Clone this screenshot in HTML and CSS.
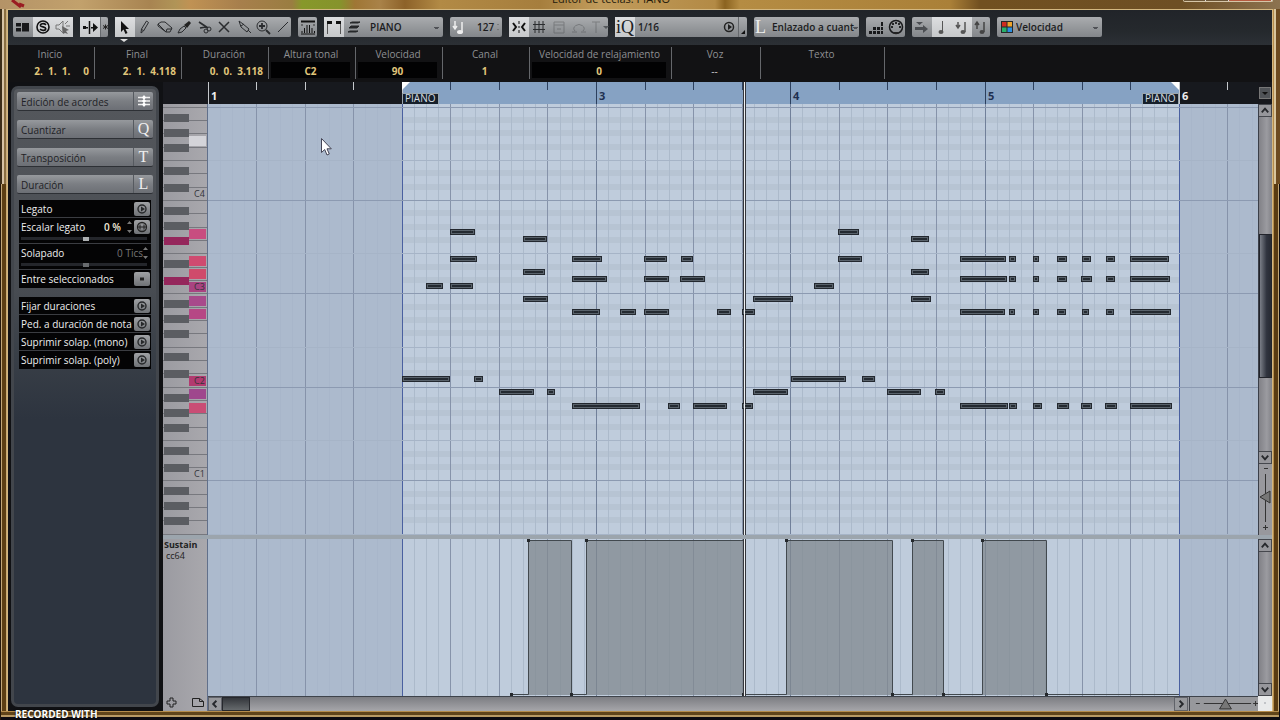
FILE: index.html
```html
<!DOCTYPE html>
<html lang="es">
<head>
<meta charset="utf-8">
<title>Editor de teclas: PIANO</title>
<link rel="stylesheet" href="styles.css">
</head>
<body>
<div class="desktop">
  <header class="titlebar">
    <svg class="app-mark" width="20" height="8" viewBox="0 0 20 8" aria-hidden="true"><path d="M4 0L13 7M11 4l5 2" stroke="#9a1c22" stroke-width="3" fill="none"/></svg>
    <span class="titlebar-text">Editor de teclas: PIANO</span>
    <div class="window-controls"><i></i><i></i><i class="close"></i></div>
  </header>

  <main class="window">
    <div class="toolbar">
      <div class="group g-60">
        <button aria-label="Configurar"><svg viewBox="0 0 20 20"><path d="M3 6h5v3.500H3zM3 11h5v3.500H3zM9 6h7v8.500H9z" fill="#17181a"/></svg></button>
        <button class="on" aria-label="Editor solo"><svg viewBox="0 0 20 20"><circle cx="10" cy="10" r="6" fill="none" stroke="#111" stroke-width="1.600"/><path d="M13 7.800C11 6 7 6.500 7.500 8.700C8 10.300 12.500 9.600 12.700 11.500C12.800 13.800 9 13.800 7 12.200" fill="none" stroke="#111" stroke-width="1.700"/></svg></button>
        <button class="on" aria-label="Respuesta acústica"><svg viewBox="0 0 20 20"><path d="M3 8h3l4-4v12l-4-4H3z" fill="none" stroke="#777"/><path d="M12 7l3-3M13 9h4" stroke="#777"/><path d="M9 9l7 4l-3 1l2 3l-3-1l-2 1z" fill="#666"/></svg></button>
      </div>
      <div class="group g-28">
        <button class="on grow" aria-label="Autodesplazamiento"><svg viewBox="0 0 20 20"><path d="M9.500 4v13" stroke="#111" stroke-width="1.500"/><path d="M3 9h3v3H3zM6 10h2v1.500H6zM11 10h3v1.500h-3zM13 6l5 4.500l-5 4.500z" fill="#111"/></svg></button>
        <button class="narrow" aria-label="Opciones"><svg viewBox="0 0 9 20"><path d="M4.500 7.500v5M2 8.500l5 3M7 8.500l-5 3" stroke="#222"/></svg></button>
      </div>
      <div class="group g-176 tools">
        <button class="on" aria-label="Seleccionar"><svg viewBox="0 0 20 20"><path d="M6 4v11l2.500-2.500L10.500 17l2-1l-2-4H14z" fill="#111"/></svg></button>
        <button aria-label="Dibujar"><svg viewBox="0 0 20 20"><path d="M6 16l.5-4l5-8l2 1.500l-5 8.500zM6.500 12l2 2" class="line"/></svg></button>
        <button aria-label="Borrar"><svg viewBox="0 0 20 20"><path d="M3 7l3-2h4l7 6l-2 4h-4zM3 7v2l8 6M11 15l1-3h5" class="line"/></svg></button>
        <button aria-label="Recortar"><svg viewBox="0 0 20 20"><path d="M3 16l2-4l4-3l2 2l-4 4z" class="line"/><path d="M9 8l5-4l2 2l-4 5z" fill="#222"/></svg></button>
        <button aria-label="Dividir"><svg viewBox="0 0 20 20"><path d="M4 5l9 6M5 11l6-1" class="line" stroke-width="1.700"/><circle cx="14" cy="12" r="2" class="line"/><circle cx="11" cy="14" r="2" class="line"/></svg></button>
        <button aria-label="Enmudecer"><svg viewBox="0 0 20 20"><path d="M4 5l10 10M14 5L4 15" class="line" stroke-width="1.500"/></svg></button>
        <button aria-label="Pegar"><svg viewBox="0 0 20 20"><path d="M4 4l2 6l6 5l2-3l-6-5zM13 13l3 3M6 9l3-2" class="line"/></svg></button>
        <button aria-label="Zoom"><svg viewBox="0 0 20 20"><circle cx="7" cy="9" r="5" class="line"/><path d="M4 9h6M7 6v6M11 13l4 4" class="line" stroke-width="1.800"/></svg></button>
        <button aria-label="Línea"><svg viewBox="0 0 20 20"><path d="M3 15L13 5" class="line"/></svg></button>
      </div>
      <div class="group g-19">
        <button aria-label="Controladores"><svg viewBox="0 0 20 20"><path d="M3 4.500h14" stroke="#111" stroke-width="2"/><path d="M4 7v2M16 7v2" stroke="#333"/><path d="M4 16v-2M6.500 16v-5M9 16V8M11.500 16V8M14 16v-5M16.500 16v-2M3 17h14" stroke="#111"/></svg></button>
      </div>
      <div class="group g-119">
        <button class="on" aria-label="Mostrar bordes"><svg viewBox="0 0 20 20"><path d="M3.500 17V4M16.500 17V4" stroke="#555"/><path d="M3 4h5v3H3zM12 4h5v3h-5z" fill="#111"/></svg></button>
        <button aria-label="Editar parte activa"><svg viewBox="0 0 20 20"><path d="M6 6l2-1h8l-2 1zM5 11l2-2h8l-2 2zM4 15l2-1h8l-2 1z" fill="#26282a" stroke="#26282a"/></svg></button>
        <select aria-label="Parte"><option>PIANO</option></select>
      </div>
      <div class="group g-52">
        <button aria-label="Velocidad de inserción"><svg viewBox="0 0 20 20"><path d="M5 4v7M3 9l2 3l2-3M12 5v10" stroke="#eee" stroke-width="1.500" fill="none"/><ellipse cx="10" cy="15" rx="3" ry="2" fill="#eee"/></svg></button>
        <input class="velocity" type="text" value="127" aria-label="Velocidad de inserción">
        <svg class="spin" width="5" height="20" viewBox="0 0 5 20" aria-hidden="true"><path d="M0 5l2.500-2L5 5zM0 16h5l-2.500 2z" fill="#444"/></svg>
      </div>
      <div class="group g-99">
        <button class="on" aria-label="Ajuste"><svg viewBox="0 0 20 20"><path d="M10 4v3M10 9v2M10 13v3" stroke="#111"/><path d="M4 6l3 4l-3 4M16 6l-3 4l3 4" fill="none" stroke="#111" stroke-width="2"/></svg></button>
        <button aria-label="Rejilla"><svg viewBox="0 0 20 20"><path d="M6 4v12M10 4v12M14 4v12M4 7.500h12M4 12.500h12" class="line"/></svg></button>
        <button class="dim" aria-label="Tipo de rejilla"><svg viewBox="0 0 20 20"><path d="M5 5h10v11H5zM5 8h10M8 12h4" class="line"/></svg></button>
        <button class="dim" aria-label="Bucle"><svg viewBox="0 0 20 20"><path d="M6 14a5 4 0 1 1 8 0M3 15h5M12 15h5" class="line"/></svg></button>
        <button class="dim" aria-label="Texto"><svg viewBox="0 0 20 20"><path d="M3 5h8M7 5v11" class="line"/></svg></button>
        <span class="caret"></span>
      </div>
      <div class="group g-132">
        <button class="on serif" aria-label="Cuantización iterativa">iQ</button>
        <span class="field">1/16</span>
        <button aria-label="Aplicar cuantización"><svg viewBox="0 0 20 20"><circle cx="11" cy="10" r="4.500" fill="none" stroke="#222" stroke-width="1.500"/><path d="M10 7l4 3l-4 3z" fill="#222"/></svg></button>
        <button class="narrow" aria-label="Panel de cuantización"><svg viewBox="0 0 9 20"><path d="M6 13v4H2z" fill="#111"/></svg></button>
      </div>
      <div class="group g-105">
        <span class="letter">L</span>
        <select class="cut" aria-label="Duración de cuantización"><option>Enlazado a cuant</option></select>
      </div>
      <div class="group g-39">
        <button aria-label="Entrada por pasos"><svg viewBox="0 0 20 20"><path d="M3 14h3v3H3zM7 14h3v3H7zM11 14h3v3h-3zM7 10h3v3H7zM11 10h3v3h-3zM15 14h2v3h-2zM15 10h2v3h-2zM15 5h2v4h-2z" fill="#17181a"/></svg></button>
        <button aria-label="Entrada MIDI"><svg viewBox="0 0 20 20"><circle cx="10" cy="10" r="6.500" fill="none" stroke="#17181a" stroke-width="1.500"/><path d="M8 16h4" stroke="#222" stroke-width="2"/><circle cx="6" cy="10" r="1"/><circle cx="7" cy="7" r="1"/><circle cx="10" cy="6" r="1"/><circle cx="13" cy="7" r="1"/><circle cx="14" cy="10" r="1"/></svg></button>
      </div>
      <div class="group g-78">
        <button aria-label="Mover inserción"><svg viewBox="0 0 20 20"><path d="M4 5h7L7.500 8zM3 10h8V8l5 4l-5 4v-3H3z" fill="#4b4e52"/></svg></button>
        <button class="on" aria-label="Grabar altura"><svg viewBox="0 0 20 20"><path d="M10.500 4v11" stroke="#555"/><ellipse cx="9" cy="15" rx="2.500" ry="2" fill="#555"/></svg></button>
        <button class="on" aria-label="Grabar velocidad"><svg viewBox="0 0 20 20"><path d="M6 5v5M4 8l2 3l2-3M13 5v10" stroke="#555" stroke-width="1.500" fill="none"/><ellipse cx="11" cy="15" rx="2.500" ry="2" fill="#555"/></svg></button>
        <button aria-label="Grabar velocidad de relajamiento"><svg viewBox="0 0 20 20"><path d="M5 5v7M3 8l2-3l2 3M12 5v10" stroke="#444" stroke-width="1.500" fill="none"/><ellipse cx="10" cy="15" rx="2.500" ry="2" fill="#444"/></svg></button>
      </div>
      <div class="group g-105">
        <svg class="swatch" viewBox="0 0 12 12" aria-hidden="true"><path d="M0 0h12v12H0z" fill="#26282a"/><path d="M1 1h4.500v4.500H1z" fill="#d02b20"/><path d="M6.500 1H11v4.500H6.500z" fill="#f0a52a"/><path d="M1 6.500h4.500V11H1z" fill="#27b06a"/><path d="M6.500 6.500H11V11H6.500z" fill="#2b8fe0"/></svg>
        <select aria-label="Colores"><option>Velocidad</option></select>
      </div>
    </div>

    <dl class="info">
      <div class="w-87"><dt>Inicio</dt><dd class="time">2.  1.  1.     0</dd></div>
      <div class="w-87"><dt>Final</dt><dd class="time">2.  1.  4.118</dd></div>
      <div class="w-87"><dt>Duración</dt><dd class="time">0.  0.  3.118</dd></div>
      <div class="w-87"><dt>Altura tonal</dt><dd class="box">C2</dd></div>
      <div class="w-87"><dt>Velocidad</dt><dd class="box">90</dd></div>
      <div class="w-87"><dt>Canal</dt><dd>1</dd></div>
      <div class="w-142"><dt>Velocidad de relajamiento</dt><dd class="box">0</dd></div>
      <div class="w-89"><dt>Voz</dt><dd class="plain">--</dd></div>
      <div class="w-124"><dt>Texto</dt><dd></dd></div>
    </dl>

    <div class="work">
      <aside class="inspector">
        <button class="section">Edición de acordes<span><svg width="12" height="12" viewBox="0 0 12 12"><path d="M0 2.500h12M0 6h12M0 9.500h12" stroke="#eee" stroke-width="1.500"/><path d="M6 0l2 2.500L6 5L4 2.500zM6 3.500L8 6L6 8.500L4 6zM6 7l2 2.500L6 12L4 9.500z" fill="#fff"/></svg></span></button>
        <button class="section">Cuantizar<span>Q</span></button>
        <button class="section">Transposición<span>T</span></button>
        <button class="section">Duración<span>L</span></button>
        <ul class="params">
          <li><b>Legato</b><button class="act" aria-label="Aplicar legato"><svg viewBox="0 0 16 13"><use href="#play"/></svg></button></li>
          <li class="tall">
            <label for="scale">Escalar legato</label><output>0 %</output>
            <svg class="steps" width="5" height="12" viewBox="0 0 5 12"><path d="M0 3l2.500-3L5 3zM0 9h5l-2.500 3z" fill="#777"/></svg>
            <button class="act" aria-label="Escalar"><svg viewBox="0 0 16 13"><circle cx="8" cy="6.500" r="4.500" fill="none" stroke="#222" stroke-width="1.300"/><path d="M3 6.500h10M6 4v5M10 4v5" stroke="#222"/></svg></button>
            <input id="scale" type="range" value="52">
          </li>
          <li class="tall">
            <label for="overlap">Solapado</label><output class="off">0 Tics</output>
            <svg class="steps" width="5" height="12" viewBox="0 0 5 12"><path d="M0 3l2.500-3L5 3zM0 9h5l-2.500 3z" fill="#777"/></svg>
            <input id="overlap" class="off" type="range" value="52">
          </li>
          <li><b>Entre seleccionados</b><button class="act" aria-label="Entre seleccionados"><svg viewBox="0 0 16 13"><path d="M6 5h4v3H6z" fill="#222"/></svg></button></li>
        </ul>
        <ul class="params">
          <li><b>Fijar duraciones</b><button class="act" aria-label="Fijar duraciones"><svg viewBox="0 0 16 13"><g id="play"><circle cx="8" cy="6.500" r="4" fill="none" stroke="#26282a" stroke-width="1.400"/><path d="M7 4l4 2.500L7 9z" fill="#26282a"/></g></svg></button></li>
          <li><b>Ped. a duración de nota</b><button class="act" aria-label="Pedal a duración"><svg viewBox="0 0 16 13"><use href="#play"/></svg></button></li>
          <li><b>Suprimir solap. (mono)</b><button class="act" aria-label="Suprimir mono"><svg viewBox="0 0 16 13"><use href="#play"/></svg></button></li>
          <li><b>Suprimir solap. (poly)</b><button class="act" aria-label="Suprimir poly"><svg viewBox="0 0 16 13"><use href="#play"/></svg></button></li>
        </ul>
      </aside>

      <section class="editor">
        <div class="ruler-gap"></div>
        <div class="ruler"><svg id="ruler"></svg></div>
        <div class="ruler-menu"><button aria-label="Opciones de regla"><span class="caret"></span></button></div>

        <div class="keys"><svg id="keys"></svg></div>
        <div class="roll"><svg id="roll"></svg>
          <svg class="pointer" width="11" height="18" viewBox="0 0 11 18" aria-hidden="true"><path d="M.5.500v14l3.200-3l2.300 5.500l2.300-1l-2.300-5.200h4.300z" fill="#fff" stroke="#445"/></svg>
        </div>
        <div class="vbar">
          <button aria-label="Arriba"><svg viewBox="0 0 13 12"><path d="M3 8l3.500-4L10 8" class="chev"/></svg></button>
          <div class="vtrack"><div class="vthumb"></div></div>
          <button aria-label="Abajo"><svg viewBox="0 0 13 12"><path d="M3 4l3.500 4L10 4" class="chev"/></svg></button>
          <svg class="vzoom" viewBox="0 0 13 71"><path d="M5 4.500h4M4 63.500h5M6.500 61v5M6.500 10v48" stroke="#333" fill="none"/><path d="M1 33l10-6v12z" fill="#777" stroke="#333"/></svg>
        </div>

        <div class="split"></div>

        <div class="lane-name"><strong>Sustain</strong><span>cc64</span></div>
        <div class="lane"><svg id="lane"></svg></div>
        <div class="vbar">
          <button aria-label="Arriba"><svg viewBox="0 0 13 12"><path d="M3 8l3.500-4L10 8" class="chev"/></svg></button>
          <div class="vtrack"></div>
          <button aria-label="Abajo"><svg viewBox="0 0 13 12"><path d="M3 4l3.500 4L10 4" class="chev"/></svg></button>
        </div>

        <div class="lane-tools">
          <button aria-label="Añadir pista"><svg width="11" height="11" viewBox="0 0 11 11"><path d="M4 1h3v3h3v3H7v3H4V7H1V4h3z" fill="none" stroke="#222"/></svg></button>
          <button aria-label="Preajustes"><svg width="12" height="11" viewBox="0 0 12 11"><path d="M.5 1.500h7l4 3v5H.5zM7.500 1.500v3h4" fill="none" stroke="#222"/></svg></button>
        </div>
        <div class="hbar">
          <button aria-label="Izquierda"><svg viewBox="0 0 13 13"><path d="M8 3L4.500 6.500L8 10" class="chev"/></svg></button>
          <div class="htrack"><div class="hthumb"></div></div>
          <button aria-label="Derecha"><svg viewBox="0 0 13 13"><path d="M5 3l3.500 3.500L5 10" class="chev"/></svg></button>
          <svg class="hzoom" viewBox="0 0 69 14"><path d="M6 6.500h4M14 6.500h48M64 6.500h5M66.500 4v5" stroke="#333" fill="none"/><path d="M30 12l6-10l6 10z" fill="#777" stroke="#333"/></svg>
        </div>
        <div class="grip"></div>
      </section>
    </div>
  </main>
  <footer class="frame-foot"></footer>
  <div class="watermark">RECORDED WITH</div>
</div>
<script src="script.js"></script>
</body>
</html>
```
FILE: styles.css
```css
* { box-sizing: border-box; }
body { margin: 0; background: #0c0b12; font: 10px/14px "Open Sans", "Noto Sans", sans-serif; }
button, input, select { font: inherit; border: 0; padding: 0; margin: 0; background: none; color: inherit; border-radius: 0; }
svg { display: block; }

.desktop { position: relative; display: flex; flex-direction: column; min-height: 100vh; padding: 0 7px; background: linear-gradient(90deg, #3b2d18 0 2px, #d6c2a3 2px 4px, #8a6f42 4px 6px, #c7ab7a 6px 7px, transparent 7px calc(100% - 6px), #d8c59d calc(100% - 6px) calc(100% - 4px), #6c4a20 calc(100% - 4px)) 0 0 / 100% 184px no-repeat, linear-gradient(90deg, #24180c 0 1px, #c2a778 1px 2px, #5c3f14 2px 6px, #c9aa71 6px 7px, #111 7px calc(100% - 7px), #b58c4c calc(100% - 7px) calc(100% - 6px), #593b12 calc(100% - 6px) calc(100% - 2px), #c2a778 calc(100% - 2px) calc(100% - 1px), #0c0b12 calc(100% - 1px)); }
.titlebar { position: relative; display: flex; justify-content: center; height: 9px; margin: 0 -7px; overflow: hidden; background: linear-gradient(90deg, #b49367 0, #c2a16c 80px, #a88451 150px, #b09457 175px, #c09254 190px, #a77f4c 240px, #9a7d41 292px, #87982a 302px, #86932c 340px, #9f7635 355px, #a98248 380px, #8d6229 405px, #b28a45 440px, #a67e3d 540px, #c19c5c 600px, #b38a45 715px, #8b6320 725px, #b58c43 740px, #aa8038 950px, #715020 980px, #6e4f24 1180px, #8c7350 1280px); }
.titlebar-text { display: flex; align-items: flex-end; height: 5px; margin-right: 58px; font-size: 11px; line-height: 12px; color: #241a0c; }
.app-mark { position: absolute; left: 8px; top: 0; }
.window-controls { position: absolute; right: 7px; top: 0; display: flex; width: 90px; height: 2px; border: 1px solid #d5c5a7; border-top: 0; border-radius: 0 0 3px 3px; }
.window-controls i { flex: 1; background: #6d5738; border-right: 1px solid #ddd; }
.window-controls .close { flex: 2; background: #b65b40; }

.window { flex: 1; display: flex; flex-direction: column; border: 1px solid #d3b780; border-bottom: 0; background: #101114; }
.frame-foot { height: 9px; margin: 0 -6px; background: linear-gradient(#b58c4c 0 1px, #60441a 1px 4px, #b99a65 4px 6px, #0c0b12 6px); }
.watermark { position: absolute; left: 15px; bottom: -1px; font-weight: 700; color: #fff; text-shadow: 0 0 2px #000; }

.toolbar { display: flex; gap: 7px; height: 35px; padding: 7px 5px 8px; background: linear-gradient(#212429, #25292d 60%, #2c3035); }
.group { position: relative; display: flex; align-items: stretch; height: 20px; border-radius: 2px; background: linear-gradient(#aaacaf, #96999c 50%, #83868a); color: #202124; font-weight: 600; flex: none; }
.group button { display: flex; align-items: center; justify-content: center; flex: none; width: 20px; }
.group .grow { flex: 1; width: auto; }
.group button svg { flex: none; width: 20px; height: 20px; }
.group .on { background: linear-gradient(#dddee0, #c6c8ca); }
.group .narrow { width: 9px; border-left: 1px solid #66696d; }
.group .narrow svg { width: 9px; }
.tools button { flex: 1; width: auto; }
.tools::after { content: ""; position: absolute; left: 5px; top: 22px; border: 4px solid transparent; border-top: 3px solid #ddd; border-bottom: 0; }
.dim { opacity: .3; }
.line { fill: none; stroke: #2a2c2f; }
.chev { fill: none; stroke: #26282c; stroke-width: 2; }
.g-60 { width: 60px; } .g-28 { width: 28px; } .g-176 { width: 176px; } .g-19 { width: 19px; } .g-119 { width: 119px; }
.g-52 { width: 52px; } .g-99 { width: 99px; } .g-132 { width: 132px; } .g-105 { width: 105px; } .g-39 { width: 39px; } .g-78 { width: 78px; }
.g-19 button, .g-39 button, .g-78 button { flex: 1; width: auto; }
.group select { appearance: none; flex: 1; min-width: 0; padding: 0 10px 0 6px; overflow: hidden; background: linear-gradient(#505257, #505257) no-repeat right 4px center / 5px 1px, linear-gradient(#505257, #505257) no-repeat right 5px top 11px / 3px 1px; color: #1b1c1e; }
.group .cut { padding: 0 0 0 5px; background-position: right 1px center, right 2px top 11px; }
.velocity { width: 20px; margin-left: 7px; color: #1b1c1e; }
.spin { margin-left: auto; }
.g-52 { padding-right: 3px; }
.caret { align-self: center; margin: auto; border: 3px solid transparent; border-top-color: #55585c; border-bottom: 0; }
.dim + .caret { margin: 0 -6px; }
.group .serif, .letter { font: 18px/20px "Liberation Serif", serif; }
.letter { width: 13px; text-align: center; color: #eee; }
.field { flex: 1; padding-left: 3px; line-height: 20px; }
.swatch { width: 12px; height: 12px; margin: 4px 0 0 4px; }
.swatch + select { padding-left: 3px; }

.info { display: flex; height: 37px; margin: 0; padding-top: 2px; background: #121214; }
.info > div { height: 32px; flex: none; border-right: 1px solid #65676b; text-align: center; }
.info dt { height: 15px; padding: 0 2px 0 0; color: #8e9093; white-space: nowrap; }
.info dd { margin: 0 5px 0 2px; height: 16px; font-weight: 700; line-height: 18px; color: #e0c67b; }
.info .time { text-align: right; white-space: pre; }
.info .box { background: #020203; }
.info .plain { color: #ccc; font-weight: 400; }
.w-87 { width: 87px; } .w-142 { width: 142px; } .w-89 { width: 89px; } .w-124 { width: 124px; }

.work { flex: 1; display: flex; min-height: 0; }
.inspector { flex: none; width: 148px; margin: 4px 3px 4px 3px; padding: 3px; border: 3px solid #42464c; border-radius: 7px; background: linear-gradient(#55585d, #484c52 200px, #3a4048 260px, #2d343f 330px); color: #ddd; }
.section { display: flex; justify-content: space-between; width: 100%; height: 19px; margin-bottom: 9px; padding-left: 4px; border-radius: 2px; background: linear-gradient(#96999d, #7b7e83 50%, #6c6f75); color: #1f2226; line-height: 20px; border-bottom: 1px solid #2d3035; }
.section:nth-of-type(3) { margin-bottom: 8px; }
.section:last-of-type { margin-bottom: 0; }
.section span { display: flex; align-items: center; justify-content: center; width: 20px; border-left: 1px solid #565a60; font: 16px/18px "Liberation Serif", serif; color: #eee; }
.params { list-style: none; margin: 6px 2px 9px; padding: 0; background: #040405; }
.params li { display: flex; align-items: center; height: 18px; padding: 0 1px 0 2px; border-bottom: 1px solid #3b3d42; }
.params li:last-child { border: 0; }
.params .tall { flex-wrap: wrap; height: 26px; align-content: flex-start; padding-top: 2px; }
.params b, .params label { flex: 1; min-width: 0; font-weight: 500; white-space: nowrap; color: #eee; }
.params output { font-weight: 600; color: #f2ead9; }
.params output.off { color: #777; font-weight: 400; }
.steps { margin: 0 2px 0 6px; }
.off + .steps { margin-left: 0; }
.act { flex: none; width: 16px; height: 14px; border-radius: 2px; background: linear-gradient(#a0a2a5, #6f7276); }
.act svg { width: 16px; height: 14px; }
.params input { appearance: none; width: 126px; height: 3px; margin: 3px 0 0 0; background: #24262b; }
.params input::-webkit-slider-thumb { appearance: none; width: 6px; height: 4px; background: #aeb1b3; }
.params input.off::-webkit-slider-thumb { background: #686b6e; }

.editor { position: relative; flex: 1; display: grid; grid-template-columns: 45px minmax(0, 1fr) 14px; grid-template-rows: 22px minmax(431px, 1fr) 4px 157px 15px; background: #17181d; min-width: 0; margin-left: 1px; }
.editor > div { overflow: hidden; position: relative; }
.ruler svg, .keys svg, .roll > svg:first-child, .lane svg { position: absolute; width: 100%; height: 100%; }
.ruler-menu { padding: 5px 0 0 1px; }
.ruler-menu button { display: flex; width: 12px; height: 12px; background: #505357; border: 1px solid #777; }
.ruler-menu .caret { border-top-color: #111; }
.keys, .lane-name, .lane-tools { background: linear-gradient(90deg, #9b9ba1, #a9a8ad); border-right: 1px solid #61708b; }
.roll, .lane { background: #acbacd; }
.roll .pointer { position: absolute; left: 113px; top: 34px; }
.split { grid-column: 1 / -1; background: #9ca5ad; }
.lane-name { display: flex; flex-direction: column; padding: 0 1px; font-size: 9px; line-height: 11px; color: #222; }
.lane-name span { padding-left: 2px; }
.lane-tools { display: flex; justify-content: space-between; padding: 0 3px 2px; }
.vbar { display: flex; flex-direction: column; background: #8b8b90; border-left: 1px solid #3b3f48; }
.vbar button { height: 13px; flex: none; border: 1px solid #45474d; border-left: 0; background: #96969b; }
.vbar button svg { width: 12px; height: 11px; }
.vtrack { position: relative; flex: 1; background: linear-gradient(90deg, #818187, #9b9ba0 60%, #818187); }
.vthumb { position: absolute; inset: 35% 0 22%; background: linear-gradient(90deg, #7a7e87, #30343f 60%, #272a33); border: 1px solid #22242b; }
.vzoom { height: 71px; background: #98989d; }
.hbar { display: flex; border-top: 1px solid #3e434b; background: #97989c; }
.hbar button { width: 14px; flex: none; border: 1px solid #606269; }
.htrack { position: relative; flex: 1; background: linear-gradient(#7c7d82, #a6a6aa); }
.hthumb { width: 28px; height: 100%; background: linear-gradient(#34373c, #666a6d); border: 1px solid #26282d; }
.hzoom { width: 69px; height: 14px; margin-left: 1px; border-left: 1px solid #3d3f46; }
.grip { background: radial-gradient(circle at 1px 1px, #c2c4c8 1px, transparent 1px) 6px 6px / 4px 4px no-repeat, #e9eaeb; }

svg text { font-family: "Open Sans", sans-serif; }
.ruler-num { font-size: 11px; font-weight: 700; }
.part-label { font-size: 10px; fill: #d5dde2; }
.key-label { font-size: 9px; fill: #33343a; }
```
FILE: script.js
```js
const NS = 'http://www.w3.org/2000/svg';
const BAR = 194.25;
const PART_START = 194;
const PART_END = 971;
const PLAYHEAD = 536;
const OCTAVE = 93.4;
const FIRST_OCTAVE = 96;
const WHITE = OCTAVE / 7;

function add(svg, tag, attrs, text) {
  const el = document.createElementNS(NS, tag);
  for (const k in attrs) el.setAttribute(k, attrs[k]);
  if (text) el.textContent = text;
  svg.appendChild(el);
  return el;
}
function rect(svg, x, y, width, height, fill) {
  return add(svg, 'rect', { x, y, width, height, fill, 'shape-rendering': 'crispEdges' });
}
function playhead(svg) {
  rect(svg, PLAYHEAD - 1, 0, 3, '100%', '#34363c');
  rect(svg, PLAYHEAD, 0, 1, '100%', '#f0f2f4');
}
function timeGrid(svg) {
  for (let i = 1; i < 160; i++) {
    const x = Math.floor(i * BAR / 16);
    const inside = x > PART_START && x < PART_END;
    const colour = i % 16 === 0 ? '#71809a' : i % 4 === 0 ? '#8693aa' : inside ? '#acbacb' : '#a8b6ca';
    rect(svg, x, 0, 1, '100%', colour);
  }
  rect(svg, PART_START, 0, 1, '100%', '#4a60a0');
  rect(svg, PART_END, 0, 1, '100%', '#4a60a0');
}

/* Ruler */
const ruler = document.getElementById('ruler');
rect(ruler, 0, 0, '100%', '100%', '#17191e');
rect(ruler, PART_START, 0, PART_END - PART_START, 22, '#86a2c3');
const visible = ruler.getBoundingClientRect().width - 10;
for (let i = 0; i * BAR / 4 < visible; i++) {
  const x = Math.floor(i * BAR / 4);
  const inside = x > PART_START && x < PART_END;
  rect(ruler, x, 0, 1, i % 4 ? 8 : 22, inside ? '#2c405e' : '#c5c8cc');
  if (i % 4 === 0 && i !== 4) add(ruler, 'text', { x: x + 3, y: 18, class: 'ruler-num', fill: inside ? '#1f3050' : '#eee' }, String(i / 4 + 1));
}
add(ruler, 'path', { d: `M${PART_START} 0h8l-8 8z M${PART_END} 0h-8l8 8z`, fill: '#fff' });
for (const x of [PART_START, PART_END - 37]) {
  rect(ruler, x, 11, 37, 11, '#9aa6ae');
  rect(ruler, x + 1, 12, 35, 10, '#17202b');
  add(ruler, 'text', { x: x + 3, y: 20, class: 'part-label' }, 'PIANO');
}
playhead(ruler);

/* Keyboard */
const keys = document.getElementById('keys');
for (let i = -8; i < 60; i++) rect(keys, 0, Math.round(FIRST_OCTAVE + i * WHITE), 44, 1, '#77787e');
const held = [
  [37, '#d4d4d9'], [130, '#c84d80'], [157, '#cf4b70'], [170, '#cf4b6b'], [183, '#a94381'],
  [197, '#a84a8b'], [210, '#b64785'], [277, '#b23a70'], [290, '#9f478d'], [304, '#c94d75']
];
for (const [y, colour] of held) rect(keys, 26, y - 5, 17, 10, colour);
for (let o = -2; o < 8; o++) {
  const top = FIRST_OCTAVE + o * OCTAVE;
  for (const d of [11, 26, 41, 64, 81]) {
    const y = Math.round(top + d);
    const pressed = o === 0 && (d === 41 || d === 81);
    rect(keys, 1, y - 4, 25, 8, pressed ? '#95275c' : '#5b5d62');
  }
}
['C4', 'C3', 'C2', 'C1'].forEach((name, i) => add(keys, 'text', { x: 31, y: 93 + i * OCTAVE, class: 'key-label' }, name));

/* Notes */
const roll = document.getElementById('roll');
rect(roll, PART_START, 0, PART_END - PART_START, '100%', '#bfccdc');
for (let o = -2; o < 8; o++) {
  const top = FIRST_OCTAVE + o * OCTAVE;
  for (const k of [1, 2, 3, 5, 6]) rect(roll, PART_START, Math.round(top + k * WHITE) - 3, PART_END - PART_START, 6, '#b7c4d3');
}
timeGrid(roll);
for (let o = -2; o < 8; o++) {
  const top = FIRST_OCTAVE + o * OCTAVE;
  rect(roll, 0, Math.round(top), '100%', 1, '#8c9ab1');
  rect(roll, 0, Math.round(top + 4 * WHITE), '100%', 1, '#a6b4c7');
}
playhead(roll);
/* Row centre, then start and end of every note on that row */
const notes = {
  128: [[242, 267], [630, 651]],
  135: [[315, 339], [703, 721]],
  155: [[242, 269], [364, 394], [436, 459], [473, 485], [630, 654], [752, 798], [801, 808], [825, 831], [849, 859], [874, 883], [898, 907], [922, 961]],
  168: [[315, 337], [703, 721]],
  175: [[364, 399], [436, 461], [472, 497], [752, 799], [801, 808], [825, 831], [849, 859], [873, 884], [898, 907], [922, 962]],
  182: [[218, 235], [242, 265], [606, 626]],
  195: [[315, 340], [545, 585], [703, 723]],
  208: [[364, 392], [412, 428], [436, 461], [509, 523], [534, 547], [752, 797], [801, 807], [825, 831], [849, 858], [874, 881], [898, 906], [922, 963]],
  275: [[194, 242], [266, 275], [583, 638], [654, 667]],
  288: [[291, 326], [339, 347], [545, 580], [679, 713], [727, 737]],
  302: [[364, 432], [460, 472], [485, 519], [534, 545], [752, 800], [801, 809], [825, 834], [849, 861], [873, 884], [897, 909], [922, 964]]
};
for (const row in notes) {
  for (const [start, end] of notes[row]) {
    const y = row - 3, w = end - start;
    rect(roll, start, y, w, 6, '#23282f');
    rect(roll, start + 1, y + 1, w - 2, 4, '#59626b');
    rect(roll, start + 2, y + 2, w - 4, 2, '#242a31');
  }
}
rect(roll, PLAYHEAD, 0, 1, '100%', '#f0f2f4');

/* Sustain pedal */
const lane = document.getElementById('lane');
rect(lane, PART_START, 0, PART_END - PART_START, '100%', '#bfccdc');
const pedal = [[320, 363], [378, 535], [578, 684], [704, 735], [774, 838]];
timeGrid(lane);
for (const [a, b] of pedal) rect(lane, a, 2, b - a, 154, 'rgba(128,136,143,.75)');
let path = 'M303 155.500';
for (const [a, b] of pedal) path += `H${a + .5}V1.500H${b + .5}V155.500`;
add(lane, 'path', { d: path + `H${PART_END}`, fill: 'none', stroke: '#42494f' });
rect(lane, 302, 154, 3, 3, '#25292d');
for (const [a, b] of pedal) {
  rect(lane, a - 1, 0, 3, 3, '#25292d');
  rect(lane, b - 1, 154, 3, 3, '#25292d');
}
playhead(lane);
```
